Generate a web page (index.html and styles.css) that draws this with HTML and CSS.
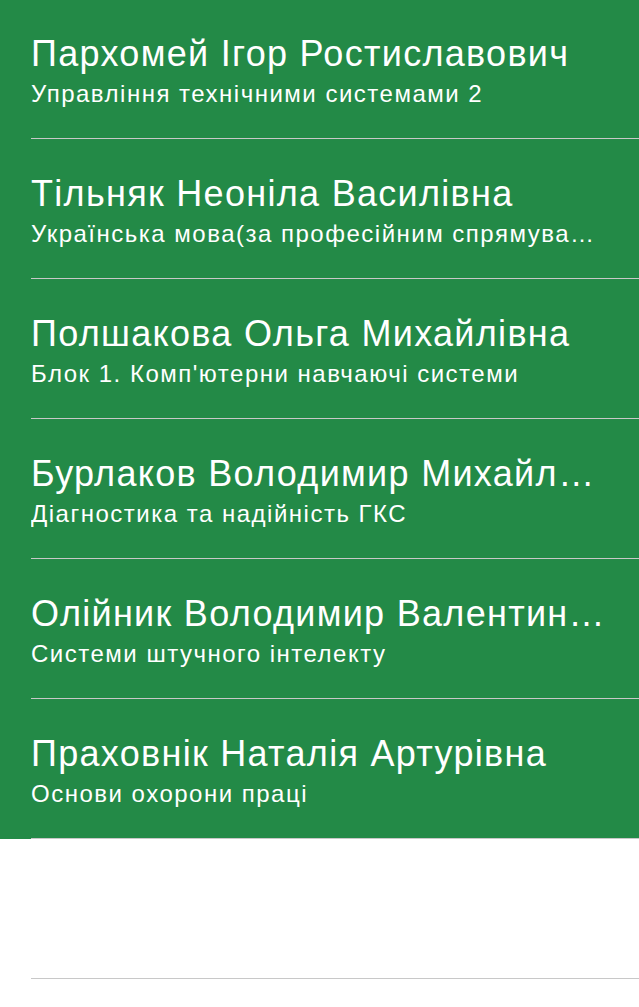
FILE: index.html
```html
<!DOCTYPE html>
<html lang="uk">
<head>
<meta charset="utf-8">
<link rel="stylesheet" href="styles.css">
</head>
<body>
<div class="list">
  <div class="row green">
    <div class="content">
      <div class="name">Пархомей Ігор Ростиславович</div>
      <div class="subject">Управління технічними системами 2</div>
    </div>
  </div>
  <div class="row green">
    <div class="content">
      <div class="name">Тільняк Неоніла Василівна</div>
      <div class="subject">Українська мова(за професійним спрямуванням)</div>
    </div>
  </div>
  <div class="row green">
    <div class="content">
      <div class="name">Полшакова Ольга Михайлівна</div>
      <div class="subject">Блок 1. Комп'ютерни навчаючі системи</div>
    </div>
  </div>
  <div class="row green">
    <div class="content">
      <div class="name">Бурлаков Володимир Михайлович</div>
      <div class="subject">Діагностика та надійність ГКС</div>
    </div>
  </div>
  <div class="row green">
    <div class="content">
      <div class="name">Олійник Володимир Валентинович</div>
      <div class="subject">Системи штучного інтелекту</div>
    </div>
  </div>
  <div class="row green">
    <div class="content">
      <div class="name">Праховнік Наталія Артурівна</div>
      <div class="subject">Основи охорони праці</div>
    </div>
  </div>
  <div class="row empty">
    <div class="content"></div>
  </div>
</div>
</body>
</html>
```
FILE: styles.css
```css
html, body {
  margin: 0;
  padding: 0;
  background: #ffffff;
}
body {
  font-family: "Liberation Sans", Arial, sans-serif;
  overflow: hidden;
}
.list {
  margin-top: -1px;
  display: flex;
  flex-direction: column;
}
.row {
  height: 140px;
  box-sizing: border-box;
  display: flex;
  flex-direction: column;
}
.row.green {
  background: #238a47;
}
.content {
  flex: 1;
  margin-left: 31px;
  padding-right: 33px;
  border-bottom: 1px solid #c8c8c8;
  display: flex;
  flex-direction: column;
  padding-top: 35px;
  min-width: 0;
  color: #ffffff;
}
.name {
  font-size: 36px;
  line-height: 40px;
  letter-spacing: 1.3px;
  white-space: nowrap;
  overflow: hidden;
  text-overflow: ellipsis;
}
.subject {
  margin-top: 5px;
  font-size: 24px;
  line-height: 30px;
  letter-spacing: 1.5px;
  white-space: nowrap;
  overflow: hidden;
  text-overflow: ellipsis;
}
```
